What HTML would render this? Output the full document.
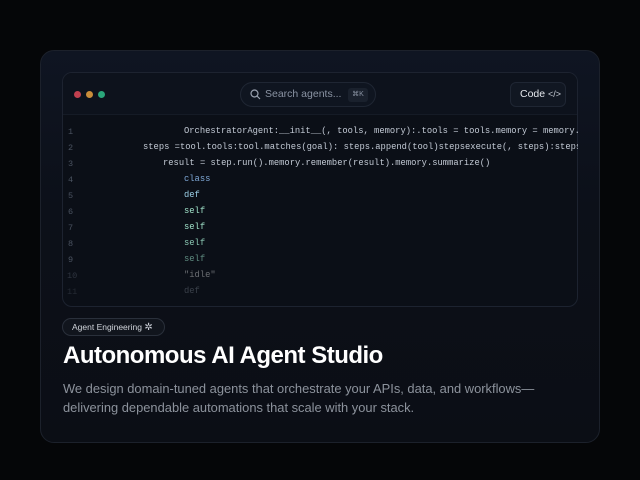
<!DOCTYPE html>
<html><head><meta charset="utf-8"><style>
*{margin:0;padding:0;box-sizing:border-box}
body{width:640px;height:480px;background:#050608;font-family:"Liberation Sans",sans-serif;position:relative;overflow:hidden}
.card{position:absolute;left:40px;top:50px;width:560px;height:393px;border-radius:14px;background:linear-gradient(180deg,#0f1522 0%,#0c1019 40%,#0b0e15 100%);border:1px solid #1c212b}
.panel{position:absolute;left:62px;top:72px;width:516px;height:235px;border-radius:10px;background:#0b0f17;border:1px solid #1d2330;overflow:hidden}
.hdr{position:absolute;left:0;top:0;width:100%;height:42px;background:#0d121c;border-bottom:1px solid #151b26}
.dot{position:absolute;top:18px;width:7px;height:7px;border-radius:50%}
.search{position:absolute;left:177px;top:9px;width:136px;height:25px;border-radius:13px;background:#0f1520;border:1px solid #1f2633;color:#8a93a3;font-size:10.5px;line-height:23px;padding-left:24px;white-space:nowrap}
.kbd{position:absolute;right:7px;top:5px;height:14px;width:20px;border-radius:3px;background:#1a212d;font-size:7px;line-height:14px;text-align:center;color:#8a93a3}
.code{position:absolute;left:447px;top:9px;width:56px;height:25px;border-radius:6px;background:#111722;border:1px solid #1f2633;color:#e6e9ee;font-size:10.5px;line-height:23px;padding-left:9px;white-space:nowrap}
.clip{position:absolute;left:62px;top:74px;width:516px;height:233px;overflow:hidden}
.ln{position:absolute;font-family:"Liberation Mono",monospace;font-size:8.5px;color:#4a5260}
.c{position:absolute;font-family:"Liberation Mono",monospace;font-size:8.8px;color:#c3cad5;white-space:pre}
.tag{position:absolute;left:62px;top:318px;width:103px;height:18px;border-radius:9px;border:1px solid #2a303b;background:#11151d;color:#d0d4da;font-size:8.5px;line-height:16px;padding-left:9px}
h1{position:absolute;left:63px;top:342px;font-size:24px;font-weight:bold;color:#fff;letter-spacing:-0.5px}
p{position:absolute;left:63px;top:379px;width:520px;font-size:12.9px;line-height:19px;color:#8c929c}
</style></head><body>
<div class="card"></div>
<div class="panel">
<div class="hdr">
<div class="dot" style="left:11px;background:#c0404f"></div>
<div class="dot" style="left:23px;background:#c98d3a"></div>
<div class="dot" style="left:35px;background:#2aa67a"></div>
<div class="search"><svg style="position:absolute;left:9px;top:6px" width="11" height="11" viewBox="0 0 11 11"><circle cx="4.5" cy="4.5" r="3.5" fill="none" stroke="#9aa2b0" stroke-width="1.2"/><path d="M7 7l3 3" stroke="#9aa2b0" stroke-width="1.2"/></svg>Search agents...<span class="kbd">⌘K</span></div>
<div class="code">Code <span style="font-size:9px;color:#c9cfd8">&lt;/&gt;</span></div>
</div>
</div>
<div class="clip">
<div class="ln" style="top:53px;left:6px">1</div>
<div class="ln" style="top:69px;left:6px">2</div>
<div class="ln" style="top:85px;left:6px">3</div>
<div class="ln" style="top:101px;left:6px">4</div>
<div class="ln" style="top:117px;left:6px">5</div>
<div class="ln" style="top:133px;left:6px">6</div>
<div class="ln" style="top:149px;left:6px">7</div>
<div class="ln" style="top:165px;left:6px">8</div>
<div class="ln" style="top:181px;left:6px">9</div>
<div class="ln" style="top:197px;left:5px;color:#2f3540">10</div>
<div class="ln" style="top:213px;left:5px;color:#252a34">11</div>
<div class="c" style="left:122px;top:52px">OrchestratorAgent:__init__(, tools, memory):.tools = tools.memory = memory.</div>
<div class="c" style="left:81px;top:68px">steps =tool.tools:tool.matches(goal): steps.append(tool)stepsexecute(, steps):steps</div>
<div class="c" style="left:101px;top:84px">result = step.run().memory.remember(result).memory.summarize()</div>
<div class="c" style="left:122px;top:100px;color:#7fa8d6">class</div>
<div class="c" style="left:122px;top:116px;color:#9cd0e8">def</div>
<div class="c" style="left:122px;top:132px;color:#9fe0c8">self</div>
<div class="c" style="left:122px;top:148px;color:#9fe0c8">self</div>
<div class="c" style="left:122px;top:164px;color:#8cc9b4">self</div>
<div class="c" style="left:122px;top:180px;color:#5f8c80">self</div>
<div class="c" style="left:122px;top:196px;color:#6b6e73">"idle"</div>
<div class="c" style="left:122px;top:212px;color:#3a404a">def</div>
</div>
<div class="tag">Agent Engineering <span style="color:#c8ccd4;font-size:10px">✲</span></div>
<h1>Autonomous AI Agent Studio</h1>
<p>We design domain-tuned agents that orchestrate your APIs, data, and workflows—delivering dependable automations that scale with your stack.</p>
</body></html>
